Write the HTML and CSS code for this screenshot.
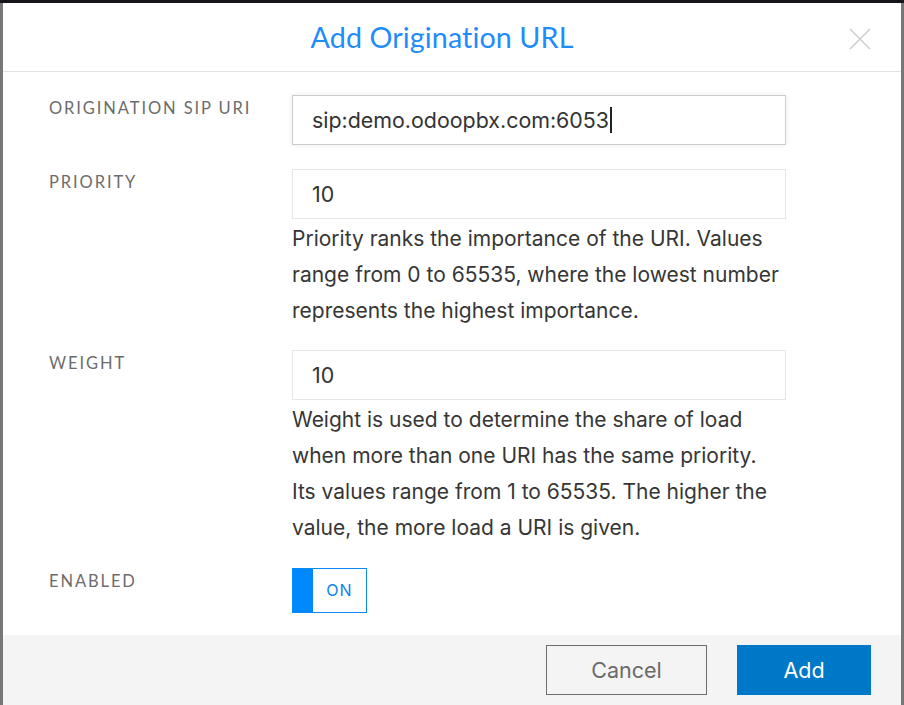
FILE: index.html
```html
<!DOCTYPE html>
<html>
<head>
<meta charset="utf-8">
<link rel="stylesheet" href="styles.css">
</head>
<body>
<div class="topbar"></div>
<div class="modal">
  <div class="modal-header">
    <h1 class="modal-title">Add Origination URL</h1>
    <button class="close" aria-label="Close">
      <svg width="22" height="22" viewBox="0 0 22 22"><path d="M1 1 L21 21 M21 1 L1 21" stroke="#cfcfcf" stroke-width="1.6" fill="none"/></svg>
    </button>
  </div>
  <div class="modal-body">
    <div class="row">
      <div class="label">ORIGINATION SIP URI</div>
      <div class="field">
        <div class="input focused">sip:demo.odoopbx.com:6053<span class="caret"></span></div>
      </div>
    </div>
    <div class="row">
      <div class="label">PRIORITY</div>
      <div class="field">
        <div class="input">10</div>
        <p class="help">Priority ranks the importance of the URI. Values<br>range from 0 to 65535, where the lowest number<br>represents the highest importance.</p>
      </div>
    </div>
    <div class="row">
      <div class="label">WEIGHT</div>
      <div class="field">
        <div class="input">10</div>
        <p class="help">Weight is used to determine the share of load<br>when more than one URI has the same priority.<br>Its values range from 1 to 65535. The higher the<br>value, the more load a URI is given.</p>
      </div>
    </div>
    <div class="row">
      <div class="label">ENABLED</div>
      <div class="field">
        <div class="toggle"><span class="toggle-knob"></span><span class="toggle-text">ON</span></div>
      </div>
    </div>
  </div>
  <div class="modal-footer">
    <button class="btn btn-cancel">Cancel</button>
    <button class="btn btn-add">Add</button>
  </div>
</div>
</body>
</html>
```
FILE: styles.css
```css
html, body {
  margin: 0;
  padding: 0;
}
body {
  background: #777777;
  font-family: Inter, Lato, sans-serif;
  width: 904px;
  height: 705px;
  overflow: hidden;
}
.topbar {
  height: 3px;
  background: #15161b;
}
.modal {
  margin-left: 3px;
  width: 898px;
  height: 702px;
  background: #ffffff;
  display: flex;
  flex-direction: column;
}
.modal-header {
  position: relative;
  height: 69px;
  box-sizing: border-box;
  border-bottom: 1px solid #e3e3e3;
  display: flex;
  align-items: center;
  justify-content: center;
  padding: 0 20px 1px 0;
}
.modal-title {
  margin: 0;
  font-family: Lato, sans-serif;
  font-weight: 400;
  font-size: 28.7px;
  color: #1e8cfa;
  letter-spacing: 0.1px;
}
.close {
  position: absolute;
  right: 30px;
  top: 25px;
  width: 22px;
  height: 22px;
  padding: 0;
  border: 0;
  background: none;
}
.close svg {
  display: block;
}
.modal-body {
  flex: 1;
  padding: 23px 0 0 46px;
  display: flex;
  flex-direction: column;
  gap: 24px;
}
.row {
  display: grid;
  grid-template-columns: 243px 494px;
}
.label {
  font-family: Lato, sans-serif;
  font-size: 16.5px;
  line-height: 24px;
  letter-spacing: 1.9px;
  color: #6c6c6c;
  padding-top: 1px;
}
.input {
  box-sizing: border-box;
  height: 50px;
  border: 1px solid #e6e6e6;
  padding-left: 19px;
  display: flex;
  align-items: center;
  font-size: 21.4px;
  color: #333333;
}
.input.focused {
  border-color: #cdcdcd;
  box-shadow: 0 0 6px rgba(0, 0, 0, 0.08);
}
.caret {
  display: inline-block;
  width: 2px;
  height: 26px;
  background: #222;
  margin-left: 1px;
}
.help {
  margin: 2px 0 -2px;
  font-size: 21px;
  line-height: 35.8px;
  color: #363636;
  white-space: nowrap;
}
.toggle {
  box-sizing: border-box;
  width: 75px;
  height: 45px;
  border: 1px solid #0a8cf8;
  display: flex;
  align-items: stretch;
}
.toggle-knob {
  width: 20px;
  background: #0088ff;
}
.toggle-text {
  flex: 1;
  display: flex;
  align-items: center;
  justify-content: center;
  font-size: 16px;
  letter-spacing: 1px;
  color: #0a84f0;
}
.modal-footer {
  height: 70px;
  box-sizing: border-box;
  background: #f4f4f4;
  display: flex;
  justify-content: flex-end;
  align-items: flex-start;
  padding: 10px 30px 0 0;
  gap: 30px;
}
.btn {
  font-family: Inter, Lato, sans-serif;
  font-size: 21.5px;
  height: 50px;
  box-sizing: border-box;
  cursor: pointer;
}
.btn-cancel {
  width: 161px;
  background: #f4f4f4;
  border: 1px solid #6e6e6e;
  color: #6a6a6a;
}
.btn-add {
  width: 134px;
  background: #0078c8;
  border: 0;
  color: #ffffff;
}
```
